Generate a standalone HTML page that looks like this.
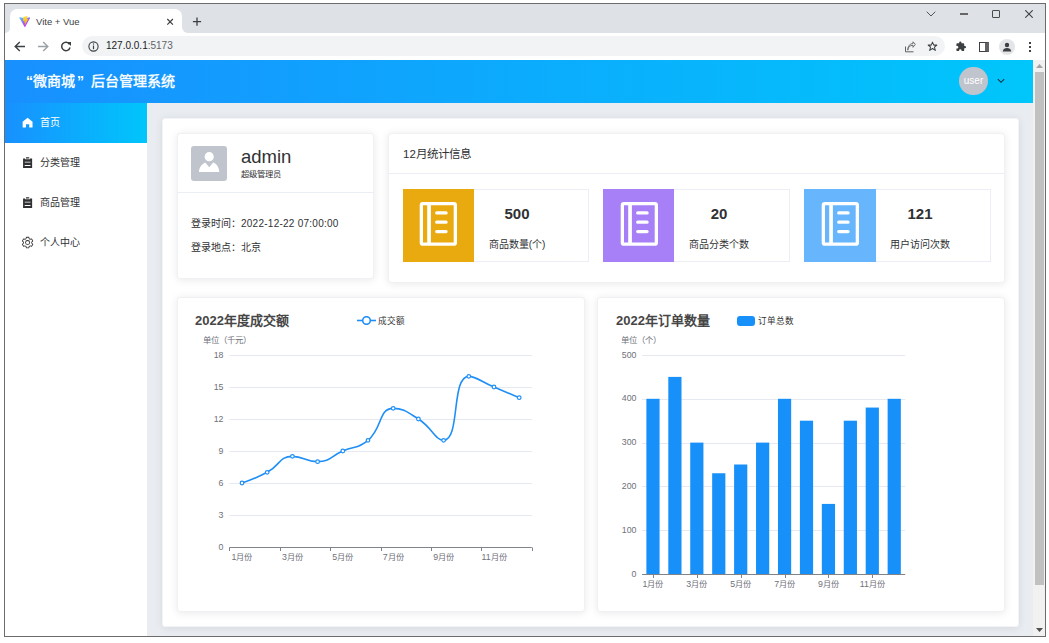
<!DOCTYPE html>
<html lang="zh-CN"><head><meta charset="utf-8">
<style>
*{margin:0;padding:0;box-sizing:border-box}
html,body{width:1049px;height:643px;overflow:hidden;background:#fff;font-family:"Liberation Sans",sans-serif;color:#303133}
.a{position:absolute;white-space:nowrap}
.card{position:absolute;background:#fff;border-radius:3px;border:1px solid #eff1f5;box-shadow:0 1px 9px rgba(0,0,0,.09)}
.menu{position:absolute;left:5px;width:142px;height:40px;font-size:10px;color:#303133}
.box{position:absolute;top:189px;width:186px;height:73px;border:1px solid #ebeef5;background:#fff}
.ic{position:absolute;left:-1px;top:-1px;width:71px;height:73px}
.num{position:absolute;font-size:15px;font-weight:bold;color:#303133;line-height:15px;text-align:center}
.lbl{position:absolute;font-size:10px;color:#303133;line-height:10px;text-align:center}
</style></head><body>
<!-- window frame -->
<div class="a" style="left:4px;top:3px;width:1042px;height:634px;border:1px solid #6c6c6c"></div>
<div class="a" style="left:5px;top:4px;width:1040px;height:29px;background:#dee1e6"></div>
<!-- tab -->
<div class="a" style="left:10px;top:9px;width:172px;height:25px;background:#fff;border-radius:7px 7px 0 0"></div>
<div class="a" style="left:5px;top:26px;width:5px;height:7px;background:#fff"></div>
<div class="a" style="left:5px;top:26px;width:5px;height:7px;background:#dee1e6;border-radius:0 0 5px 0"></div>
<div class="a" style="left:4px;top:3px;width:1px;height:40px;background:#6c6c6c"></div>
<div class="a" style="left:182px;top:26px;width:7px;height:7px;background:#fff"></div>
<div class="a" style="left:182px;top:26px;width:7px;height:7px;background:#dee1e6;border-radius:0 0 0 6px"></div>
<svg class="a" style="left:18.7px;top:15.8px" width="11.6" height="11.4" viewBox="0 0 410 404"><defs><linearGradient id="vg" x1="6" y1="33" x2="235" y2="344" gradientUnits="userSpaceOnUse"><stop offset="0" stop-color="#41d1ff"/><stop offset="1" stop-color="#bd34fe"/></linearGradient><linearGradient id="vy" x1="194.65" y1="8.82" x2="236.08" y2="292.99" gradientUnits="userSpaceOnUse"><stop offset="0" stop-color="#ffea83"/><stop offset=".08" stop-color="#ffdd35"/><stop offset="1" stop-color="#ffa800"/></linearGradient></defs><path d="M399.641 59.5246L215.643 388.545C211.844 395.338 202.084 395.378 198.228 388.618L10.5817 59.5563C6.38087 52.1896 12.6802 43.2665 21.0281 44.7586L205.223 77.6824C206.398 77.8924 207.601 77.8904 208.776 77.6763L389.119 44.8058C397.439 43.2894 403.768 52.1434 399.641 59.5246Z" fill="url(#vg)"/><path d="M292.965 1.5744L156.801 28.2552C154.563 28.6937 152.906 30.5903 152.771 32.8664L144.395 174.33C144.198 177.662 147.258 180.248 150.51 179.498L188.42 170.749C191.967 169.931 195.172 173.055 194.443 176.622L183.18 231.775C182.422 235.487 185.907 238.661 189.532 237.56L212.947 230.446C216.577 229.344 220.065 232.527 219.297 236.242L201.398 322.875C200.278 328.294 207.486 331.249 210.492 326.603L212.5 323.5L323.454 102.072C325.312 98.3645 322.108 94.137 318.036 94.9228L279.014 102.454C275.347 103.161 272.227 99.746 273.262 96.1583L298.731 7.86689C299.767 4.27314 296.636 0.855181 292.965 1.5744Z" fill="url(#vy)"/></svg>
<div class="a" style="left:36px;top:16px;font-size:9.5px;line-height:11px;color:#3c4043">Vite + Vue</div>
<svg class="a" style="left:166px;top:18px" width="8" height="8" viewBox="0 0 8 8"><path d="M1.3 1L6.9 6.6M6.9 1L1.3 6.6" stroke="#3c4043" stroke-width="1.2"/></svg>
<svg class="a" style="left:192px;top:17px" width="10" height="10" viewBox="0 0 10 10"><path d="M5 0.6V8.8M0.9 4.7H9.1" stroke="#3c4043" stroke-width="1.3"/></svg>
<!-- window controls -->
<svg class="a" style="left:926px;top:11px" width="10" height="6" viewBox="0 0 10 6"><path d="M0.7 0.7L5 5L9.3 0.7" fill="none" stroke="#555" stroke-width="1"/></svg>
<div class="a" style="left:960px;top:13px;width:7.5px;height:2px;background:#666"></div>
<div class="a" style="left:992px;top:10px;width:8px;height:7.5px;border:1.3px solid #4a4a4a;border-radius:1px"></div>
<svg class="a" style="left:1025px;top:10px" width="8" height="8" viewBox="0 0 8 8"><path d="M0.3 0.3L7.7 7.7M7.7 0.3L0.3 7.7" stroke="#3c4043" stroke-width="1.1"/></svg>
<!-- toolbar -->
<div class="a" style="left:5px;top:33px;width:1040px;height:27px;background:#fff"></div>
<svg class="a" style="left:14px;top:41px" width="12" height="11" viewBox="0 0 12 11"><path d="M11 5.5H1.5M5.8 1L1.2 5.5L5.8 10" fill="none" stroke="#3c4043" stroke-width="1.4"/></svg>
<svg class="a" style="left:37px;top:41px" width="12" height="11" viewBox="0 0 12 11"><path d="M1 5.5H10.5M6.2 1L10.8 5.5L6.2 10" fill="none" stroke="#9aa0a6" stroke-width="1.4"/></svg>
<svg class="a" style="left:60px;top:41px" width="12" height="11" viewBox="0 0 12 11"><path d="M9.5 3.3A4.2 4.2 0 1 0 10 6.5" fill="none" stroke="#3c4043" stroke-width="1.5"/><path d="M7 1H11V5Z" fill="#3c4043"/></svg>
<div class="a" style="left:82px;top:36px;width:863px;height:20px;background:#f1f3f4;border-radius:10px"></div>
<svg class="a" style="left:88px;top:41px" width="11" height="11" viewBox="0 0 11 11"><circle cx="5.5" cy="5.5" r="4.6" fill="none" stroke="#3c4043" stroke-width="1.1"/><path d="M5.5 4.5V8.2" stroke="#3c4043" stroke-width="1.2"/><circle cx="5.5" cy="3" r="0.7" fill="#3c4043"/></svg>
<div class="a" style="left:106px;top:40px;font-size:10px;line-height:12px;color:#202124">127.0.0.1<span style="color:#5f6368">:5173</span></div>
<svg class="a" style="left:904px;top:41px" width="12" height="12" viewBox="0 0 12 12"><path d="M1.5 5.5V10.8H9.5" fill="none" stroke="#5f6368" stroke-width="1"/><path d="M3.8 9.2C4 6 6 4.3 9 4.3V6.3L11.3 3.3L9 0.8V2.6C5.8 2.6 3.8 5 3.8 9.2Z" fill="none" stroke="#5f6368" stroke-width="0.9" stroke-linejoin="round"/></svg>
<svg class="a" style="left:927px;top:41px" width="11" height="11" viewBox="0 0 24 24"><path d="M12 2.5L14.8 9H21.5L16.2 13.2L18.2 20.5L12 16.3L5.8 20.5L7.8 13.2L2.5 9H9.2Z" fill="none" stroke="#3c4043" stroke-width="2.2" stroke-linejoin="round"/></svg>
<svg class="a" style="left:955px;top:41px" width="12" height="11" viewBox="0 0 24 24"><path d="M20.5 11H19V7a2 2 0 0 0-2-2h-4V3.5a2.5 2.5 0 0 0-5 0V5H4a2 2 0 0 0-2 2v3.8h1.5a2.7 2.7 0 0 1 0 5.4H2V20a2 2 0 0 0 2 2h3.8v-1.5a2.7 2.7 0 0 1 5.4 0V22H17a2 2 0 0 0 2-2v-4h1.5a2.5 2.5 0 0 0 0-5z" fill="#3c4043"/></svg>
<div class="a" style="left:979px;top:42px;width:10px;height:10px;border:1.5px solid #3c4043;border-right:4px solid #5f6368"></div>
<div class="a" style="left:999px;top:39px;width:16px;height:16px;border-radius:50%;background:#e3e5e8"></div>
<svg class="a" style="left:1002px;top:42px" width="10" height="10" viewBox="0 0 10 10"><circle cx="5" cy="3" r="2.2" fill="#3c4043"/><path d="M0.8 9.5C1 6.8 3 6 5 6S9 6.8 9.2 9.5Z" fill="#3c4043"/></svg>
<div class="a" style="left:1029px;top:42px;width:2px;height:2px;background:#3c4043;box-shadow:0 4px 0 #3c4043,0 8px 0 #3c4043"></div>

<!-- app header -->
<div class="a" style="left:5px;top:60px;width:1028px;height:43px;background:linear-gradient(90deg,#1890ff,#00c6fb)"></div>
<div class="a" style="left:26px;top:73px;font-size:14px;line-height:16px;color:#fff;font-weight:bold">“</div><div class="a" style="left:33px;top:73px;font-size:14px;line-height:16px;color:#fff;-webkit-text-stroke:0.4px #fff">微商城</div><div class="a" style="left:77px;top:73px;font-size:14px;line-height:16px;color:#fff;font-weight:bold">”</div><div class="a" style="left:90.5px;top:73px;font-size:14px;line-height:16px;color:#fff;-webkit-text-stroke:0.4px #fff">后台管理系统</div>
<div class="a" style="left:959.3px;top:66.5px;width:28.5px;height:28.5px;border-radius:50%;background:#c0c4cc;color:#fff;font-size:10px;text-align:center;line-height:28.5px">user</div>
<svg class="a" style="left:996.5px;top:78px" width="8" height="6" viewBox="0 0 8 6"><path d="M0.8 1.2L4 4.3L7.2 1.2" fill="none" stroke="#1f3441" stroke-width="1.15"/></svg>
<!-- scrollbar -->
<div class="a" style="left:1033px;top:60px;width:12px;height:576px;background:#f1f1f1"></div>
<div class="a" style="left:1035px;top:72px;width:9px;height:513px;background:#c1c1c1"></div>
<svg class="a" style="left:1035px;top:63px" width="9" height="6" viewBox="0 0 9 6"><path d="M1 5H8L4.5 1Z" fill="#a3a3a3"/></svg>
<svg class="a" style="left:1035px;top:627px" width="9" height="6" viewBox="0 0 9 6"><path d="M1 1H8L4.5 5Z" fill="#505050"/></svg>
<!-- sidebar -->
<div class="a" style="left:5px;top:103px;width:142px;height:533px;background:#fff"></div>
<div class="menu" style="top:103px;background:linear-gradient(90deg,#1890ff,#00c6fb);color:#fff"></div>
<svg class="a" style="left:21px;top:116.4px" width="13.2" height="13.2" viewBox="0 0 1024 1024"><path d="M512 128 128 447.936V896h255.936V640H640v256h255.936V447.936z" fill="#fff"/></svg>
<div class="a" style="left:40px;top:117px;font-size:10px;line-height:11px;color:#fff">首页</div>
<svg class="a" style="left:21px;top:156.2px" width="13.2" height="13.2" viewBox="0 0 1024 1024"><path d="M704 192h160v736H160V192h160v64h384v-64zM288 512h448v-64H288v64zm0 256h448v-64H288v64zm96-576V96h256v96H384z" fill="#303133"/></svg>
<div class="a" style="left:40px;top:157px;font-size:10px;line-height:11px">分类管理</div>
<svg class="a" style="left:21px;top:196.2px" width="13.2" height="13.2" viewBox="0 0 1024 1024"><path d="M704 192h160v736H160V192h160v64h384v-64zM288 512h448v-64H288v64zm0 256h448v-64H288v64zm96-576V96h256v96H384z" fill="#303133"/></svg>
<div class="a" style="left:40px;top:197px;font-size:10px;line-height:11px">商品管理</div>
<svg class="a" style="left:21px;top:235.6px" width="13.2" height="13.2" viewBox="0 0 1024 1024"><path d="M600.704 64a32 32 0 0 1 30.464 22.208l35.2 109.376c14.784 7.232 28.928 15.36 42.432 24.512l112.384-24.192a32 32 0 0 1 34.432 15.36L944.32 364.8a32 32 0 0 1-4.032 37.504l-77.12 85.12a357.12 357.12 0 0 1 0 49.024l77.12 85.248a32 32 0 0 1 4.032 37.504l-88.704 153.6a32 32 0 0 1-34.432 15.296L708.8 803.904c-13.44 9.088-27.648 17.280-42.368 24.512l-35.264 109.376A32 32 0 0 1 600.704 960H423.296a32 32 0 0 1-30.464-22.208L357.696 828.48a351.616 351.616 0 0 1-42.56-24.64l-112.32 24.256a32 32 0 0 1-34.432-15.36L79.68 659.2a32 32 0 0 1 4.032-37.504l77.12-85.248a357.12 357.12 0 0 1 0-48.896l-77.12-85.248A32 32 0 0 1 79.68 364.8l88.704-153.6a32 32 0 0 1 34.432-15.296l112.32 24.256c13.568-9.152 27.776-17.408 42.560-24.640l35.2-109.312A32 32 0 0 1 423.232 64H600.640zm-23.424 64H446.720l-36.352 113.088-24.512 11.968a294.113 294.113 0 0 0-34.816 20.096l-22.656 15.360-116.224-25.088-65.280 113.152 79.680 88.192-1.920 27.136a293.120 293.120 0 0 0 0 40.192l1.920 27.136-79.808 88.192 65.344 113.152 116.224-25.024 22.656 15.296a294.113 294.113 0 0 0 34.816 20.096l24.512 11.968L446.720 896h130.688l36.480-113.152 24.448-11.904a288.282 288.282 0 0 0 34.752-20.096l22.592-15.296 116.288 25.024 65.280-113.152-79.744-88.192 1.920-27.136a293.120 293.120 0 0 0 0-40.256l-1.920-27.136 79.808-88.128-65.344-113.152-116.288 24.960-22.592-15.232a287.616 287.616 0 0 0-34.752-20.096l-24.448-11.904L577.344 128zM512 320a192 192 0 1 1 0 384 192 192 0 0 1 0-384zm0 64a128 128 0 1 0 0 256 128 128 0 0 0 0-256z" fill="#303133"/></svg>
<div class="a" style="left:40px;top:237px;font-size:10px;line-height:11px">个人中心</div>
<!-- main bg -->
<div class="a" style="left:147px;top:103px;width:886px;height:533px;background:#e9edf2"></div>
<div class="card" style="left:162px;top:118px;width:857px;height:509px;border-color:#f3f4f7"></div>
<!-- user card -->
<div class="card" style="left:177px;top:133px;width:197px;height:146px"></div>
<div class="a" style="left:191px;top:146px;width:36px;height:35px;background:#c0c4cc;border-radius:3px"></div>
<svg class="a" style="left:199px;top:152px" width="21" height="21" viewBox="0 0 21 21"><circle cx="10.2" cy="4.7" r="4.6" fill="#fff"/><path d="M-0.2 20.1C0.2 15 2.8 11.8 6.3 10.5L10.2 15.2L14.1 10.5C17.6 11.8 20 15 20.3 20.1Z" fill="#fff"/></svg>
<div class="a" style="left:241px;top:146px;font-size:18.5px;line-height:21px;color:#303133">admin</div>
<div class="a" style="left:241px;top:168.5px;font-size:8.3px;line-height:10px;color:#303133">超级管理员</div>
<div class="a" style="left:177px;top:192px;width:197px;height:1px;background:#ebeef5"></div>
<div class="a" style="left:191px;top:218px;font-size:10px;line-height:12px;color:#303133">登录时间：<span style="letter-spacing:.25px">2022-12-22 07:00:00</span></div>
<div class="a" style="left:191px;top:242px;font-size:10px;line-height:12px;color:#303133">登录地点：北京</div>
<!-- stats card -->
<div class="card" style="left:388px;top:133px;width:617px;height:150px"></div>
<div class="a" style="left:403px;top:147.5px;font-size:11.5px;line-height:13px;color:#303133">12月统计信息</div>
<div class="a" style="left:388px;top:173px;width:617px;height:1px;background:#ebeef5"></div>
<div class="box" style="left:403px"><div class="ic" style="background:#e9aa0f"></div></div>
<div class="box" style="left:603px;width:186.5px"><div class="ic" style="background:#a77ff7"></div></div>
<div class="box" style="left:804px;width:186.5px"><div class="ic" style="background:#67b5fc;width:72px"></div></div>
<svg class="a" style="left:402.4px;top:188px" width="72" height="74" viewBox="0 0 72 74"><rect x="19.35" y="15.65" width="34" height="40.5" rx="1.5" fill="none" stroke="#fff" stroke-width="3.3"/><path d="M27.05 15.65V56.15" stroke="#fff" stroke-width="3.7"/><path d="M34.75 24.9H44.05M34.75 34.2H44.05M34.75 43.6H44.05" stroke="#fff" stroke-width="3.3" stroke-linecap="round"/></svg>
<svg class="a" style="left:603px;top:188px" width="72" height="74" viewBox="0 0 72 74"><rect x="19.35" y="15.65" width="34" height="40.5" rx="1.5" fill="none" stroke="#fff" stroke-width="3.3"/><path d="M27.05 15.65V56.15" stroke="#fff" stroke-width="3.7"/><path d="M34.75 24.9H44.05M34.75 34.2H44.05M34.75 43.6H44.05" stroke="#fff" stroke-width="3.3" stroke-linecap="round"/></svg>
<svg class="a" style="left:804px;top:188px" width="72" height="74" viewBox="0 0 72 74"><rect x="19.35" y="15.65" width="34" height="40.5" rx="1.5" fill="none" stroke="#fff" stroke-width="3.3"/><path d="M27.05 15.65V56.15" stroke="#fff" stroke-width="3.7"/><path d="M34.75 24.9H44.05M34.75 34.2H44.05M34.75 43.6H44.05" stroke="#fff" stroke-width="3.3" stroke-linecap="round"/></svg>
<div class="num" style="left:479px;top:206px;width:76px">500</div>
<div class="lbl" style="left:469px;top:240px;width:96px">商品数量(个)</div>
<div class="num" style="left:681px;top:206px;width:76px">20</div>
<div class="lbl" style="left:671px;top:240px;width:96px">商品分类个数</div>
<div class="num" style="left:882px;top:206px;width:76px">121</div>
<div class="lbl" style="left:872px;top:240px;width:96px">用户访问次数</div>
<!-- chart cards -->
<div class="card" style="left:177px;top:297px;width:408px;height:315px"></div>
<div class="card" style="left:597px;top:297px;width:408px;height:315px"></div>
<div class="a" style="left:195px;top:313px;font-size:13px;line-height:16px;font-weight:bold;color:#464646">2022年度成交额</div>
<svg class="a" style="left:357px;top:316px" width="19" height="9" viewBox="0 0 19 9"><path d="M0 4.5H19" stroke="#1f8ff6" stroke-width="1.6"/><circle cx="9.5" cy="4.5" r="3.8" fill="#fff" stroke="#1f8ff6" stroke-width="1.6"/></svg>
<div class="a" style="left:378px;top:315.7px;font-size:8.6px;line-height:10px;color:#333">成交额</div>
<div class="a" style="left:203px;top:334.5px;font-size:8.4px;line-height:10px;color:#6e7079">单位（千元）</div>
<div class="a" style="left:616px;top:313px;font-size:13px;line-height:16px;font-weight:bold;color:#464646">2022年订单数量</div>
<div class="a" style="left:737px;top:315.5px;width:17.5px;height:10px;border-radius:3px;background:#1890f9"></div>
<div class="a" style="left:758px;top:315.7px;font-size:8.6px;line-height:10px;color:#333">订单总数</div>
<div class="a" style="left:621px;top:334.5px;font-size:8.4px;line-height:10px;color:#6e7079">单位（个）</div>
<svg class="a" style="left:0;top:0" width="1049" height="643" viewBox="0 0 1049 643" font-family="Liberation Sans, sans-serif">
<line x1="229.4" y1="515.5" x2="531.8" y2="515.5" stroke="#e6e9f1" stroke-width="1"/>
<line x1="229.4" y1="483.5" x2="531.8" y2="483.5" stroke="#e6e9f1" stroke-width="1"/>
<line x1="229.4" y1="451.5" x2="531.8" y2="451.5" stroke="#e6e9f1" stroke-width="1"/>
<line x1="229.4" y1="419.5" x2="531.8" y2="419.5" stroke="#e6e9f1" stroke-width="1"/>
<line x1="229.4" y1="387.5" x2="531.8" y2="387.5" stroke="#e6e9f1" stroke-width="1"/>
<line x1="229.4" y1="355.5" x2="531.8" y2="355.5" stroke="#e6e9f1" stroke-width="1"/>
<text x="223.5" y="549.6" text-anchor="end" font-size="8.8" fill="#6e7079">0</text>
<text x="223.5" y="517.6" text-anchor="end" font-size="8.8" fill="#6e7079">3</text>
<text x="223.5" y="485.6" text-anchor="end" font-size="8.8" fill="#6e7079">6</text>
<text x="223.5" y="453.6" text-anchor="end" font-size="8.8" fill="#6e7079">9</text>
<text x="223.5" y="421.6" text-anchor="end" font-size="8.8" fill="#6e7079">12</text>
<text x="223.5" y="389.6" text-anchor="end" font-size="8.8" fill="#6e7079">15</text>
<text x="223.5" y="357.6" text-anchor="end" font-size="8.8" fill="#6e7079">18</text>
<line x1="229.4" y1="547.5" x2="531.8" y2="547.5" stroke="#80838a" stroke-width="1"/>
<line x1="229.5" y1="547.5" x2="229.5" y2="551" stroke="#80838a" stroke-width="1"/>
<line x1="280.5" y1="547.5" x2="280.5" y2="551" stroke="#80838a" stroke-width="1"/>
<line x1="330.5" y1="547.5" x2="330.5" y2="551" stroke="#80838a" stroke-width="1"/>
<line x1="381.5" y1="547.5" x2="381.5" y2="551" stroke="#80838a" stroke-width="1"/>
<line x1="431.5" y1="547.5" x2="431.5" y2="551" stroke="#80838a" stroke-width="1"/>
<line x1="481.5" y1="547.5" x2="481.5" y2="551" stroke="#80838a" stroke-width="1"/>
<line x1="532.5" y1="547.5" x2="532.5" y2="551" stroke="#80838a" stroke-width="1"/>
<text x="242.0" y="559.8" text-anchor="middle" font-size="8.2" fill="#6e7079"><tspan font-size="8.8">1</tspan>月份</text>
<text x="292.4" y="559.8" text-anchor="middle" font-size="8.2" fill="#6e7079"><tspan font-size="8.8">3</tspan>月份</text>
<text x="342.8" y="559.8" text-anchor="middle" font-size="8.2" fill="#6e7079"><tspan font-size="8.8">5</tspan>月份</text>
<text x="393.2" y="559.8" text-anchor="middle" font-size="8.2" fill="#6e7079"><tspan font-size="8.8">7</tspan>月份</text>
<text x="443.6" y="559.8" text-anchor="middle" font-size="8.2" fill="#6e7079"><tspan font-size="8.8">9</tspan>月份</text>
<text x="494.0" y="559.8" text-anchor="middle" font-size="8.2" fill="#6e7079"><tspan font-size="8.8">11</tspan>月份</text>
<path d="M242.00 483.00C242.00 483.00 255.15 478.71 267.20 472.33C280.35 465.38 278.87 456.33 292.40 456.33C304.07 456.33 305.38 461.67 317.60 461.67C330.58 461.67 330.20 456.33 342.80 451.00C355.40 445.67 357.87 448.91 368.00 440.33C383.07 427.57 378.13 408.33 393.20 408.33C403.33 408.33 406.98 411.75 418.40 419.00C432.18 427.75 435.43 440.33 443.60 440.33C460.63 440.33 450.77 376.33 468.80 376.33C475.97 376.33 481.40 381.67 494.00 387.00C506.60 392.33 519.20 397.67 519.20 397.67" fill="none" stroke="#1f8ff6" stroke-width="1.6"/>
<circle cx="242.00" cy="483.00" r="1.8" fill="#fff" stroke="#1f8ff6" stroke-width="1.2"/>
<circle cx="267.20" cy="472.33" r="1.8" fill="#fff" stroke="#1f8ff6" stroke-width="1.2"/>
<circle cx="292.40" cy="456.33" r="1.8" fill="#fff" stroke="#1f8ff6" stroke-width="1.2"/>
<circle cx="317.60" cy="461.67" r="1.8" fill="#fff" stroke="#1f8ff6" stroke-width="1.2"/>
<circle cx="342.80" cy="451.00" r="1.8" fill="#fff" stroke="#1f8ff6" stroke-width="1.2"/>
<circle cx="368.00" cy="440.33" r="1.8" fill="#fff" stroke="#1f8ff6" stroke-width="1.2"/>
<circle cx="393.20" cy="408.33" r="1.8" fill="#fff" stroke="#1f8ff6" stroke-width="1.2"/>
<circle cx="418.40" cy="419.00" r="1.8" fill="#fff" stroke="#1f8ff6" stroke-width="1.2"/>
<circle cx="443.60" cy="440.33" r="1.8" fill="#fff" stroke="#1f8ff6" stroke-width="1.2"/>
<circle cx="468.80" cy="376.33" r="1.8" fill="#fff" stroke="#1f8ff6" stroke-width="1.2"/>
<circle cx="494.00" cy="387.00" r="1.8" fill="#fff" stroke="#1f8ff6" stroke-width="1.2"/>
<circle cx="519.20" cy="397.67" r="1.8" fill="#fff" stroke="#1f8ff6" stroke-width="1.2"/>
<line x1="642.0" y1="530.5" x2="905.2" y2="530.5" stroke="#e6e9f1" stroke-width="1"/>
<line x1="642.0" y1="486.5" x2="905.2" y2="486.5" stroke="#e6e9f1" stroke-width="1"/>
<line x1="642.0" y1="443.5" x2="905.2" y2="443.5" stroke="#e6e9f1" stroke-width="1"/>
<line x1="642.0" y1="399.5" x2="905.2" y2="399.5" stroke="#e6e9f1" stroke-width="1"/>
<line x1="642.0" y1="355.5" x2="905.2" y2="355.5" stroke="#e6e9f1" stroke-width="1"/>
<text x="636.5" y="576.6" text-anchor="end" font-size="8.8" fill="#6e7079">0</text>
<text x="636.5" y="532.8" text-anchor="end" font-size="8.8" fill="#6e7079">100</text>
<text x="636.5" y="489.0" text-anchor="end" font-size="8.8" fill="#6e7079">200</text>
<text x="636.5" y="445.2" text-anchor="end" font-size="8.8" fill="#6e7079">300</text>
<text x="636.5" y="401.4" text-anchor="end" font-size="8.8" fill="#6e7079">400</text>
<text x="636.5" y="357.6" text-anchor="end" font-size="8.8" fill="#6e7079">500</text>
<rect x="646.37" y="398.80" width="13.2" height="175.20" fill="#1890f9"/>
<rect x="668.30" y="376.90" width="13.2" height="197.10" fill="#1890f9"/>
<rect x="690.23" y="442.60" width="13.2" height="131.40" fill="#1890f9"/>
<rect x="712.17" y="473.26" width="13.2" height="100.74" fill="#1890f9"/>
<rect x="734.10" y="464.50" width="13.2" height="109.50" fill="#1890f9"/>
<rect x="756.03" y="442.60" width="13.2" height="131.40" fill="#1890f9"/>
<rect x="777.97" y="398.80" width="13.2" height="175.20" fill="#1890f9"/>
<rect x="799.90" y="420.70" width="13.2" height="153.30" fill="#1890f9"/>
<rect x="821.83" y="503.92" width="13.2" height="70.08" fill="#1890f9"/>
<rect x="843.77" y="420.70" width="13.2" height="153.30" fill="#1890f9"/>
<rect x="865.70" y="407.56" width="13.2" height="166.44" fill="#1890f9"/>
<rect x="887.63" y="398.80" width="13.2" height="175.20" fill="#1890f9"/>
<line x1="642.0" y1="574.5" x2="905.2" y2="574.5" stroke="#80838a" stroke-width="1"/>
<line x1="653.5" y1="574.5" x2="653.5" y2="578" stroke="#80838a" stroke-width="1"/>
<line x1="697.5" y1="574.5" x2="697.5" y2="578" stroke="#80838a" stroke-width="1"/>
<line x1="741.5" y1="574.5" x2="741.5" y2="578" stroke="#80838a" stroke-width="1"/>
<line x1="785.5" y1="574.5" x2="785.5" y2="578" stroke="#80838a" stroke-width="1"/>
<line x1="828.5" y1="574.5" x2="828.5" y2="578" stroke="#80838a" stroke-width="1"/>
<line x1="872.5" y1="574.5" x2="872.5" y2="578" stroke="#80838a" stroke-width="1"/>
<text x="653.0" y="586.8" text-anchor="middle" font-size="8.2" fill="#6e7079"><tspan font-size="8.8">1</tspan>月份</text>
<text x="696.8" y="586.8" text-anchor="middle" font-size="8.2" fill="#6e7079"><tspan font-size="8.8">3</tspan>月份</text>
<text x="740.7" y="586.8" text-anchor="middle" font-size="8.2" fill="#6e7079"><tspan font-size="8.8">5</tspan>月份</text>
<text x="784.6" y="586.8" text-anchor="middle" font-size="8.2" fill="#6e7079"><tspan font-size="8.8">7</tspan>月份</text>
<text x="828.4" y="586.8" text-anchor="middle" font-size="8.2" fill="#6e7079"><tspan font-size="8.8">9</tspan>月份</text>
<text x="872.3" y="586.8" text-anchor="middle" font-size="8.2" fill="#6e7079"><tspan font-size="8.8">11</tspan>月份</text>
</svg>
</body></html>
